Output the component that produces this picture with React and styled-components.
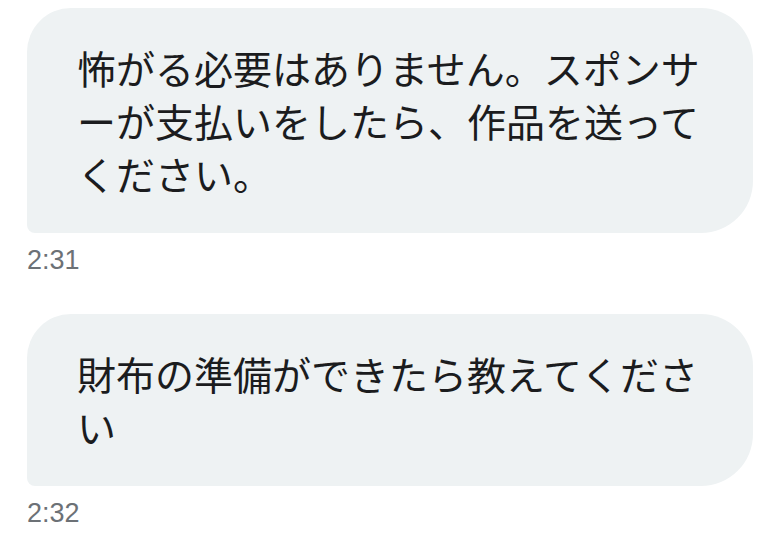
import React from 'react'
import styled, { createGlobalStyle } from 'styled-components'

const GlobalStyle = createGlobalStyle`
  html, body {
    margin: 0;
    padding: 0;
    background: #ffffff;
  }
`

const messages = [
    { id: 1, text: '怖がる必要はありません。スポンサーが支払いをしたら、作品を送ってください。', time: '2:31' },
    { id: 2, text: '財布の準備ができたら教えてください', time: '2:32' },
]

const App = () => {
    return (
        <>
            <GlobalStyle />
            <Thread>
                {messages.map((m) => (
                    <Message key={m.id}>
                        <Bubble>{m.text}</Bubble>
                        <Time>{m.time}</Time>
                    </Message>
                ))}
            </Thread>
        </>
    )
}

const Thread = styled.div`
  width: 772px;
  height: 544px;
  box-sizing: border-box;
  padding: 8px 19px 0 27px;
  display: flex;
  flex-direction: column;
  gap: 38px;
  overflow: hidden;
  background: #ffffff;
`

const Message = styled.div`
  display: flex;
  flex-direction: column;
  align-items: flex-start;
  gap: 11px;
`

const Bubble = styled.div`
  box-sizing: border-box;
  width: 726px;
  padding: 33px 50px 33px 50px;
  background: #eef2f3;
  border-radius: 44px 52px 52px 8px;
  color: #1b1c1e;
  font-family: "Noto Sans CJK JP", "Noto Sans", sans-serif;
  font-size: 39px;
  line-height: 53px;
  word-break: break-all;
`

const Time = styled.span`
  color: #6c7176;
  font-family: "Liberation Sans", Arial, sans-serif;
  font-size: 27px;
  line-height: 32px;
`

export default App
